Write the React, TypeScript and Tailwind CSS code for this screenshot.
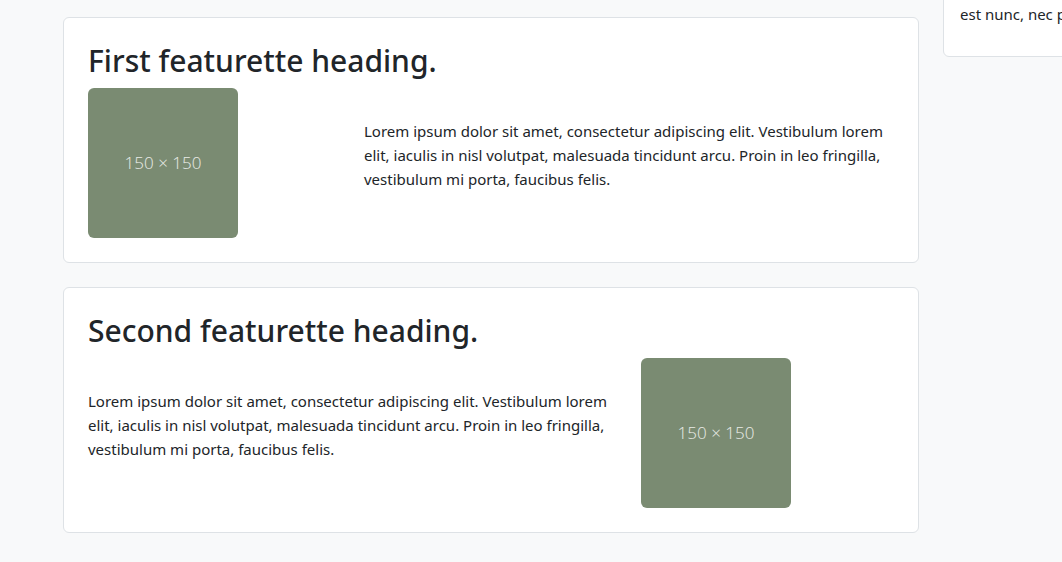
import React from "react";

const lorem =
  "Lorem ipsum dolor sit amet, consectetur adipiscing elit. Vestibulum lorem elit, iaculis in nisl volutpat, malesuada tincidunt arcu. Proin in leo fringilla, vestibulum mi porta, faucibus felis.";

function Placeholder() {
  return (
    <div className="flex h-[150px] w-[150px] items-center justify-center rounded-[6px] bg-[#7a8b72] text-[17px] font-light text-[#e9ece7] [font-family:'Open_Sans',sans-serif]">
      150 × 150
    </div>
  );
}

function Featurette({ title, reverse }: { title: string; reverse?: boolean }) {
  const text = (
    <div className="w-[553px] px-3">
      <p className="mb-4">{lorem}</p>
    </div>
  );
  const image = (
    <div className="w-[276px] px-3">
      <Placeholder />
    </div>
  );

  return (
    <div className="mb-6 rounded-[6px] border border-[#dee2e6] bg-white p-6">
      <h2 className="mb-2 text-[30px] font-medium leading-[38px] text-[#212529]">{title}</h2>
      <div className="-mx-3 flex items-center">
        {reverse ? (
          <>
            {text}
            {image}
          </>
        ) : (
          <>
            {image}
            {text}
          </>
        )}
      </div>
    </div>
  );
}

export default function App() {
  return (
    <div className="h-[562px] w-[1062px] overflow-hidden bg-[#f8f9fa] text-[15px] leading-[24px] text-[#212529] [font-family:'Noto_Sans',sans-serif]">
      <div className="flex gap-6 pl-[63px] pt-[17px]">
        {/* main column */}
        <div className="w-[856px] shrink-0">
          <Featurette title="First featurette heading." />
          <Featurette title="Second featurette heading." reverse />
        </div>

        {/* sidebar, scrolled partly out of view */}
        <div className="-mt-[56px] w-[300px] shrink-0">
          <div className="rounded-[6px] border border-[#dee2e6] bg-white px-4 pb-[14px] pt-4">
            <p className="mb-4 whitespace-nowrap">
              Donec sed odio dui. Cras justo odio,
              <br />
              est nunc, nec pretium eros tortor.
            </p>
          </div>
        </div>
      </div>
    </div>
  );
}
